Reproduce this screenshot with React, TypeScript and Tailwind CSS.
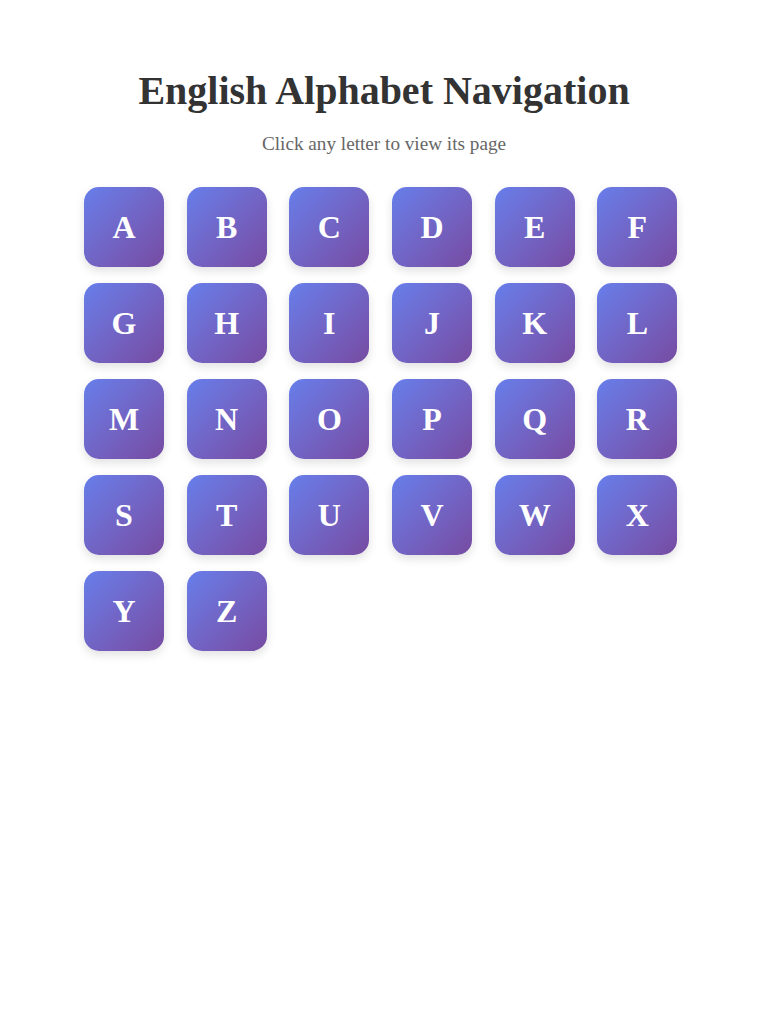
const letters = 'ABCDEFGHIJKLMNOPQRSTUVWXYZ'.split('');

export default function App() {
  return (
    <div className="min-h-screen bg-white font-['Liberation_Serif',serif] px-5 pt-[68px]">
      <div className="mx-auto max-w-[600px]">
        <h1 className="text-center text-[40px] leading-[46px] font-bold text-[#333]">
          English Alphabet Navigation
        </h1>
        <p className="mt-[19px] text-center text-[19.2px] leading-[22px] text-[#666]">
          Click any letter to view its page
        </p>
        <div className="mt-[32px] grid grid-cols-6 gap-4">
          {letters.map((l) => (
            <a
              key={l}
              href={`#${l.toLowerCase()}`}
              className="flex h-20 w-20 items-center justify-center rounded-[15px] bg-gradient-to-br from-[#667eea] to-[#764ba2] text-[32px] font-bold text-white shadow-[0_4px_10px_rgba(0,0,0,0.12)]"
            >
              {l}
            </a>
          ))}
        </div>
      </div>
    </div>
  );
}
